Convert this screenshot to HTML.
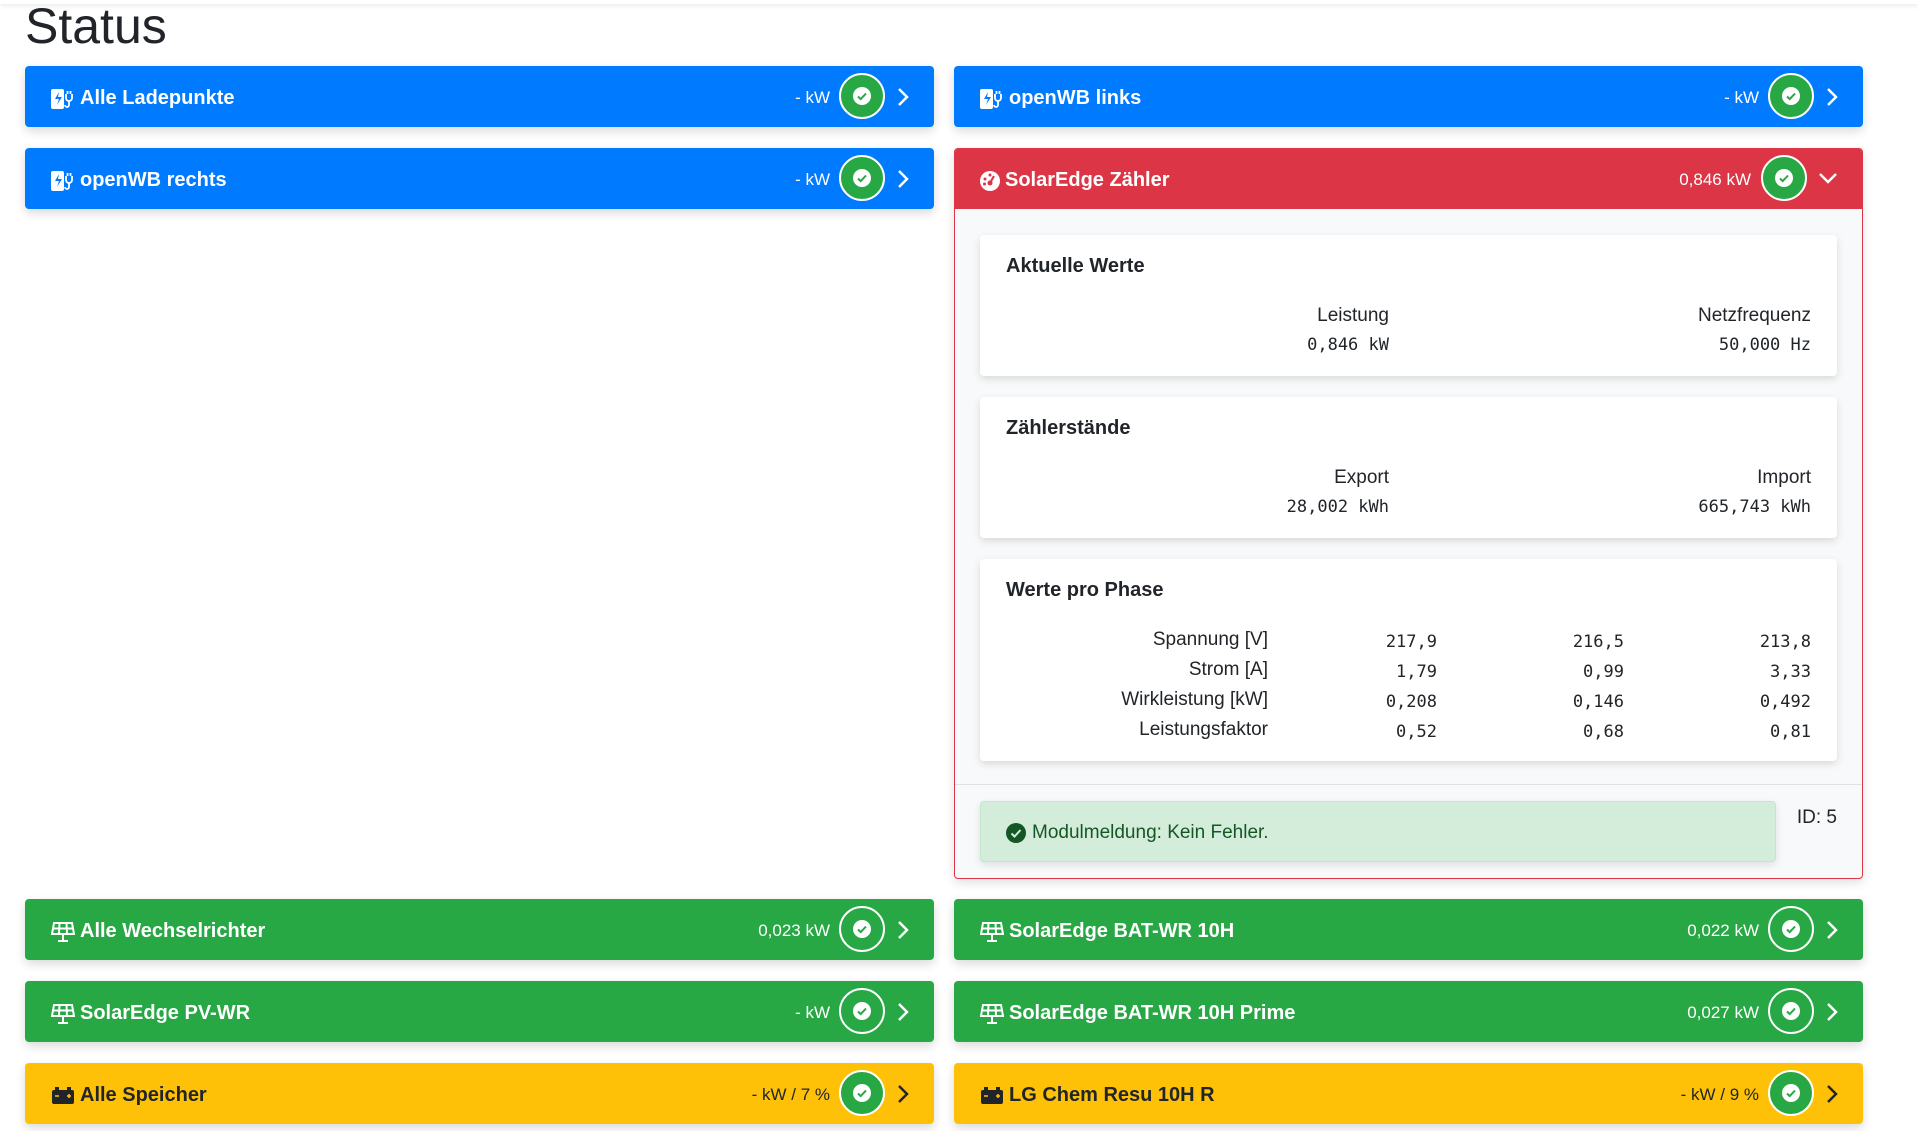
<!DOCTYPE html>
<html><head><meta charset="utf-8"><style>
*{box-sizing:border-box;margin:0;padding:0}
body{width:1918px;height:1131px;background:#fff;font-family:"Liberation Sans",sans-serif;color:#212529;position:relative;overflow:hidden}
.top{position:absolute;left:0;top:0;width:1918px;height:4px;box-shadow:0 1px 6px rgba(0,0,0,.12)}
h1{position:absolute;left:25px;top:-4px;font-size:50px;font-weight:400;line-height:60px}
.hd{position:absolute;height:61px;border-radius:4px;color:#fff;font-weight:700;font-size:20px;box-shadow:0 4px 10px rgba(0,0,0,.15)}
.L{left:25px;width:909px}.R{left:954px;width:909px}
.blue{background:#007bff}.green{background:#28a745}.yellow{background:#ffc107;color:#212529}.red{background:#dc3545}
.hd .t{position:absolute;left:26px;top:2px;line-height:61px;white-space:nowrap;display:flex;align-items:center;height:61px}
.hd .t svg{margin-right:5px}
.hd .v{position:absolute;right:104px;top:1px;line-height:61px;font-weight:400;font-size:17px}
.hd .c{position:absolute;right:49px;top:7px;width:46px;height:46px;border-radius:50%;background:#28a745;border:2px solid #fff;display:flex;align-items:center;justify-content:center}
.hd .c i{width:18px;height:18px;border-radius:50%;background:#fff;display:flex;align-items:center;justify-content:center}
.hd .ch{position:absolute;right:25px;top:21px}
.rc{position:absolute;left:954px;top:148px;width:909px;height:731px;border:1px solid #dc3545;border-radius:4px;background:#f8f9fa;box-shadow:0 4px 10px rgba(0,0,0,.12);overflow:hidden}
.in{position:absolute;left:25px;width:857px;background:#fff;border-radius:4px;box-shadow:0 3px 8px rgba(0,0,0,.13)}
.in .ti{position:absolute;left:26px;font-weight:700;font-size:20px}
.lb,.vl{position:absolute;text-align:right;white-space:nowrap}
.lb{font-size:19px;color:#212529}
.vl{font-family:"DejaVu Sans Mono","Liberation Mono",monospace;font-size:17px}
</style></head><body>
<div class="top"></div>
<h1>Status</h1>

<svg width="0" height="0" style="position:absolute"><defs>
<symbol id="plug" viewBox="0 0 24 22"><rect x="0" y="1" width="13" height="20" rx="2" fill="#fff"/><path d="M8 4 4 11h4l-2 6 5-8H7z" fill="#007bff"/><path d="M15 6v4a3 3 0 0 0 3 3 3 3 0 0 0 3-3V6M16.5 3v3M19.5 3v3M18 13v4a2 2 0 0 1-4 0" stroke="#fff" stroke-width="1.8" fill="none"/></symbol>
<symbol id="solar" viewBox="0 0 24 22"><path d="M3 2h18l2 11H1z" fill="none" stroke="#fff" stroke-width="2"/><path d="M2 7.5h20M8.5 2 8 13M15.5 2 16 13M12 13v6M7 20h10" stroke="#fff" stroke-width="2"/></symbol>
<symbol id="batt" viewBox="0 0 24 20"><rect x="1" y="4" width="22" height="14" rx="2" fill="#212529"/><rect x="4" y="1" width="4" height="4" fill="#212529"/><rect x="16" y="1" width="4" height="4" fill="#212529"/><path d="M4 10h4M16 10h4M18 8v4" stroke="#ffc107" stroke-width="1.6"/></symbol>
<symbol id="ok" viewBox="0 0 18 18"><path d="M5 9.5l2.7 2.6L13 6.5" stroke="#28a745" stroke-width="2" fill="none"/></symbol>
</defs></svg>

<div class="hd blue L" style="top:66px"><div class="t"><svg width="24" height="22"><use href="#plug"/></svg>Alle Ladepunkte</div><div class="v">- kW</div><div class="c"><i><svg width="18" height="18"><use href="#ok"/></svg></i></div><svg class="ch" width="12" height="20"><path d="M2 2l8 8-8 8" stroke="#fff" stroke-width="2.5" fill="none"/></svg></div>
<div class="hd blue R" style="top:66px"><div class="t"><svg width="24" height="22"><use href="#plug"/></svg>openWB links</div><div class="v">- kW</div><div class="c"><i><svg width="18" height="18"><use href="#ok"/></svg></i></div><svg class="ch" width="12" height="20"><path d="M2 2l8 8-8 8" stroke="#fff" stroke-width="2.5" fill="none"/></svg></div>
<div class="hd blue L" style="top:148px"><div class="t"><svg width="24" height="22"><use href="#plug"/></svg>openWB rechts</div><div class="v">- kW</div><div class="c"><i><svg width="18" height="18"><use href="#ok"/></svg></i></div><svg class="ch" width="12" height="20"><path d="M2 2l8 8-8 8" stroke="#fff" stroke-width="2.5" fill="none"/></svg></div>

<div class="rc">
 <div class="hd red" style="left:-1px;top:-1px;width:909px;border-radius:4px 4px 0 0;box-shadow:none"><div class="t" style="left:25px"><svg width="22" height="22" viewBox="0 0 22 22" style="margin-right:4px"><circle cx="11" cy="11" r="10" fill="#fff"/><circle cx="11" cy="13" r="2.5" fill="#dc3545"/><path d="M11 13l4-7" stroke="#dc3545" stroke-width="2.2"/><circle cx="6" cy="9" r="1.5" fill="#dc3545"/><circle cx="11" cy="5" r="1.5" fill="#dc3545"/><circle cx="5.5" cy="14" r="1.5" fill="#dc3545"/></svg>SolarEdge Zähler</div><div class="v" style="right:112px">0,846 kW</div><div class="c" style="right:56px"><i><svg width="18" height="18"><use href="#ok"/></svg></i></div><svg class="ch" style="right:25px;top:24px" width="20" height="12"><path d="M2 2l8 8 8-8" stroke="#fff" stroke-width="2.5" fill="none"/></svg></div>

 <div class="in" style="top:86px;height:141px">
  <div class="ti" style="top:20px">Aktuelle Werte</div>
  <div class="lb" style="right:448px;top:70px">Leistung</div>
  <div class="lb" style="right:26px;top:70px">Netzfrequenz</div>
  <div class="vl" style="right:448px;top:100px">0,846 kW</div>
  <div class="vl" style="right:26px;top:100px">50,000 Hz</div>
 </div>
 <div class="in" style="top:248px;height:141px">
  <div class="ti" style="top:20px">Zählerstände</div>
  <div class="lb" style="right:448px;top:70px">Export</div>
  <div class="lb" style="right:26px;top:70px">Import</div>
  <div class="vl" style="right:448px;top:100px">28,002 kWh</div>
  <div class="vl" style="right:26px;top:100px">665,743 kWh</div>
 </div>
 <div class="in" style="top:410px;height:202px">
  <div class="ti" style="top:20px">Werte pro Phase</div>
  <div class="lb" style="right:569px;top:70px">Spannung [V]</div>
  <div class="lb" style="right:569px;top:100px">Strom [A]</div>
  <div class="lb" style="right:569px;top:130px">Wirkleistung [kW]</div>
  <div class="lb" style="right:569px;top:160px">Leistungsfaktor</div>
  <div class="vl" style="right:400px;top:68px;line-height:30px">217,9<br>1,79<br>0,208<br>0,52</div>
  <div class="vl" style="right:213px;top:68px;line-height:30px">216,5<br>0,99<br>0,146<br>0,68</div>
  <div class="vl" style="right:26px;top:68px;line-height:30px">213,8<br>3,33<br>0,492<br>0,81</div>
 </div>
 <div style="position:absolute;left:0;top:635px;width:909px;border-top:1px solid #dee2e6"></div>
 <div style="position:absolute;left:25px;top:652px;width:796px;height:61px;background:#d4edda;border:1px solid #c3e6cb;border-radius:4px;box-shadow:0 3px 8px rgba(0,0,0,.1);color:#155724;font-size:19px;display:flex;align-items:center;padding-left:25px;padding-top:2px"><svg width="20" height="20" viewBox="0 0 20 20" style="margin-right:6px"><circle cx="10" cy="10" r="10" fill="#155724"/><path d="M5.5 10.5l3 3 6-6.5" stroke="#d4edda" stroke-width="2" fill="none"/></svg>Modulmeldung: Kein Fehler.</div>
 <div style="position:absolute;right:25px;top:658px;font-size:19px">ID: 5</div>
</div>

<div class="hd green L" style="top:899px"><div class="t"><svg width="24" height="22"><use href="#solar"/></svg>Alle Wechselrichter</div><div class="v">0,023 kW</div><div class="c"><i><svg width="18" height="18"><use href="#ok"/></svg></i></div><svg class="ch" width="12" height="20"><path d="M2 2l8 8-8 8" stroke="#fff" stroke-width="2.5" fill="none"/></svg></div>
<div class="hd green R" style="top:899px"><div class="t"><svg width="24" height="22"><use href="#solar"/></svg>SolarEdge BAT-WR 10H</div><div class="v">0,022 kW</div><div class="c"><i><svg width="18" height="18"><use href="#ok"/></svg></i></div><svg class="ch" width="12" height="20"><path d="M2 2l8 8-8 8" stroke="#fff" stroke-width="2.5" fill="none"/></svg></div>
<div class="hd green L" style="top:981px"><div class="t"><svg width="24" height="22"><use href="#solar"/></svg>SolarEdge PV-WR</div><div class="v">- kW</div><div class="c"><i><svg width="18" height="18"><use href="#ok"/></svg></i></div><svg class="ch" width="12" height="20"><path d="M2 2l8 8-8 8" stroke="#fff" stroke-width="2.5" fill="none"/></svg></div>
<div class="hd green R" style="top:981px"><div class="t"><svg width="24" height="22"><use href="#solar"/></svg>SolarEdge BAT-WR 10H Prime</div><div class="v">0,027 kW</div><div class="c"><i><svg width="18" height="18"><use href="#ok"/></svg></i></div><svg class="ch" width="12" height="20"><path d="M2 2l8 8-8 8" stroke="#fff" stroke-width="2.5" fill="none"/></svg></div>

<div class="hd yellow L" style="top:1063px"><div class="t"><svg width="24" height="20"><use href="#batt"/></svg>Alle Speicher</div><div class="v">- kW / 7 %</div><div class="c"><i><svg width="18" height="18"><use href="#ok"/></svg></i></div><svg class="ch" width="12" height="20"><path d="M2 2l8 8-8 8" stroke="#212529" stroke-width="2.5" fill="none"/></svg></div>
<div class="hd yellow R" style="top:1063px"><div class="t"><svg width="24" height="20"><use href="#batt"/></svg>LG Chem Resu 10H R</div><div class="v">- kW / 9 %</div><div class="c"><i><svg width="18" height="18"><use href="#ok"/></svg></i></div><svg class="ch" width="12" height="20"><path d="M2 2l8 8-8 8" stroke="#212529" stroke-width="2.5" fill="none"/></svg></div>
</body></html>
